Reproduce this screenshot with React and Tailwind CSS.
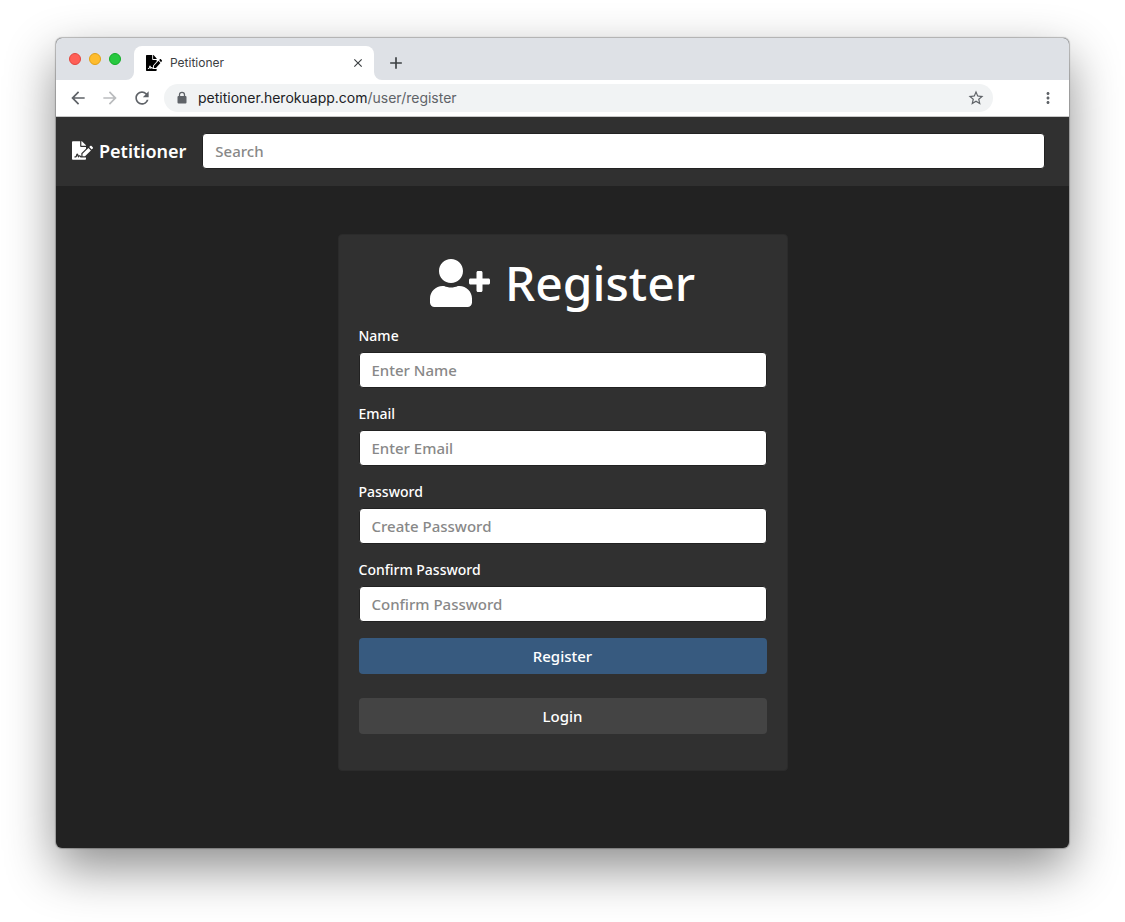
import { FaFileSignature, FaUserPlus } from "react-icons/fa";
import {
  MdAdd,
  MdArrowBack,
  MdArrowForward,
  MdClose,
  MdMoreVert,
  MdRefresh,
  MdStarBorder,
} from "react-icons/md";

const fields = [
  { id: "name", label: "Name", type: "text", placeholder: "Enter Name" },
  { id: "email", label: "Email", type: "email", placeholder: "Enter Email" },
  { id: "password", label: "Password", type: "password", placeholder: "Create Password" },
  { id: "confirm", label: "Confirm Password", type: "password", placeholder: "Confirm Password" },
];

const inputClass =
  "h-9 w-full min-w-0 rounded border border-[#222] bg-white px-3 text-[15px] font-medium text-[#444] outline-none placeholder:text-[#888]";

function TabStrip() {
  return (
    <div className="flex h-[42px] items-end bg-[#dee1e6] pl-[13px]">
      <div className="flex gap-2 self-center">
        <button aria-label="Close window" className="size-3 rounded-full border border-[#e2463f] bg-[#ff5f57]" />
        <button aria-label="Minimise window" className="size-3 rounded-full border border-[#e1a116] bg-[#febc2e]" />
        <button aria-label="Maximise window" className="size-3 rounded-full border border-[#12ac28] bg-[#28c840]" />
      </div>
      <svg className="ml-[5px] size-2 shrink-0 text-white" viewBox="0 0 8 8" aria-hidden="true">
        <path d="M8 0v8H0a8 8 0 0 0 8-8z" fill="currentColor" />
      </svg>
      <div className="flex h-[34px] w-60 items-center rounded-t-lg bg-white pr-[9px] pl-3">
        <FaFileSignature className="h-4 w-4 shrink-0 text-black" preserveAspectRatio="none" aria-hidden="true" />
        <span className="ml-2 flex-1 text-xs text-[#3c4043]">Petitioner</span>
        <button aria-label="Close tab" className="text-[#3c4043]">
          <MdClose className="size-3.5" />
        </button>
      </div>
      <svg className="size-2 shrink-0 text-white" viewBox="0 0 8 8" aria-hidden="true">
        <path d="M0 0v8h8a8 8 0 0 1-8-8z" fill="currentColor" />
      </svg>
      <button aria-label="New tab" className="mb-[7px] ml-1 text-[#3c4043]">
        <MdAdd className="size-5" />
      </button>
    </div>
  );
}

function Toolbar() {
  return (
    <div className="flex h-[37px] items-center border-b border-[#c8c8c8] bg-white px-3 text-[#5f6368]">
      <div className="flex gap-3">
        <button aria-label="Back"><MdArrowBack className="size-5" /></button>
        <button aria-label="Forward" className="text-[#babcbe]"><MdArrowForward className="size-5" /></button>
        <button aria-label="Reload"><MdRefresh className="size-5" /></button>
      </div>
      <div className="ml-3 flex h-7 flex-1 items-center rounded-full bg-[#f1f3f4] pr-2 pl-3">
        <svg className="h-3.5 w-3 shrink-0" viewBox="0 0 12 14" aria-hidden="true">
          <rect x="1.5" y="5" width="9" height="7.5" rx="1" fill="currentColor" />
          <path d="M3.5 5.5V3.800a2.500 2.500 0 0 1 5 0V5.500" fill="none" stroke="currentColor" strokeWidth="1.3" />
        </svg>
        <p className="ml-2.5 flex-1 text-sm">
          <span className="text-[#202124]">petitioner.herokuapp.com</span>/user/register
        </p>
        <button aria-label="Bookmark this page"><MdStarBorder className="size-[18px]" /></button>
      </div>
      <button aria-label="Browser menu" className="ml-[46px]"><MdMoreVert className="size-[18px]" /></button>
    </div>
  );
}

function NavBar() {
  return (
    <nav className="flex h-[69px] items-center gap-4 bg-[#303030] pr-6 pb-0.5 pl-4">
      <a href="#home" className="flex items-center gap-1.5 text-lg font-semibold text-white">
        <FaFileSignature className="h-[19px] w-[21px]" aria-hidden="true" />
        Petitioner
      </a>
      <input type="search" aria-label="Search" placeholder="Search" className={inputClass} />
    </nav>
  );
}

function RegisterCard() {
  return (
    <form
      className="w-full max-w-[450px] rounded border border-[#2b2b2b] bg-[#303030] px-5 pb-9"
      onSubmit={(event) => event.preventDefault()}
    >
      <h1 className="flex h-24 items-center justify-center gap-[15px] text-5xl font-medium text-white">
        <FaUserPlus className="h-12 w-[60px]" aria-hidden="true" />
        Register
      </h1>
      <div className="-mt-[5px] flex flex-col gap-4">
        {fields.map((field) => (
          <div key={field.id}>
            <label htmlFor={field.id} className="mb-1.5 block text-sm leading-5 font-medium text-white">
              {field.label}
            </label>
            <input id={field.id} type={field.type} placeholder={field.placeholder} className={inputClass + " block"} />
          </div>
        ))}
        <button type="submit" className="h-9 w-full rounded bg-[#375a7f] text-[15px] font-medium text-white">
          Register
        </button>
      </div>
      <button type="button" className="mt-6 block h-9 w-full rounded bg-[#444] text-[15px] font-medium text-white">
        Login
      </button>
    </form>
  );
}

export default function App() {
  return (
    <div className="flex min-h-screen flex-col bg-white px-14 pt-[38px] pb-[74px]">
      <div className="flex flex-1 flex-col overflow-hidden rounded-md bg-[#222] shadow-[0_0_1px_1px_rgba(0,0,0,0.25),0_20px_50px_rgba(0,0,0,0.45)]">
        <header className="font-[Inter,sans-serif]">
          <TabStrip />
          <Toolbar />
        </header>
        <div className="flex flex-1 flex-col font-['Noto_Sans',sans-serif]">
          <NavBar />
          <main className="flex flex-1 items-start justify-center pt-12 pb-16">
            <RegisterCard />
          </main>
        </div>
      </div>
    </div>
  );
}
